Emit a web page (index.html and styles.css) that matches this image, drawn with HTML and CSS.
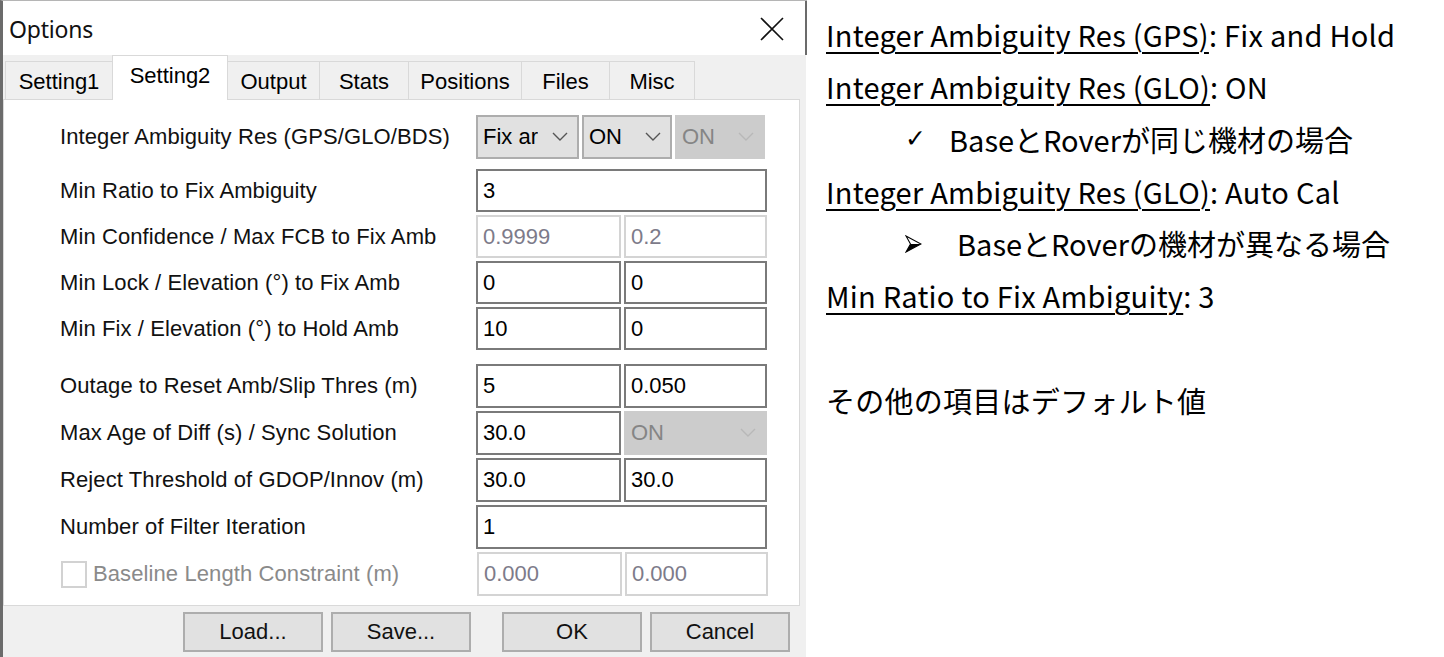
FILE: index.html
```html
<!DOCTYPE html>
<html lang="ja">
<head>
<meta charset="utf-8">
<title>Options</title>
<link rel="stylesheet" href="styles.css">
</head>
<body>
<div class="page">
  <div class="dialog">
    <div class="titlebar">
      <span class="title">Options</span>
      <svg class="close" width="24" height="24" viewBox="0 0 24 24"><path d="M1 1 L23 23 M23 1 L1 23" stroke="#111" stroke-width="1.6" fill="none"/></svg>
    </div>
    <div class="body">
      <div class="tabs">
        <div class="tab t1">Setting1</div>
        <div class="tab sel t2">Setting2</div>
        <div class="tab t3">Output</div>
        <div class="tab t4">Stats</div>
        <div class="tab t5">Positions</div>
        <div class="tab t6">Files</div>
        <div class="tab t7">Misc</div>
      </div>
      <div class="panel">
        <div class="row first">
          <div class="label">Integer Ambiguity Res (GPS/GLO/BDS)</div>
          <div class="ctrls">
            <div class="combo c1"><span>Fix ar</span><svg class="chev" width="16" height="10" viewBox="0 0 16 10"><path d="M1 1 L8 8 L15 1" stroke="#555" stroke-width="1.4" fill="none"/></svg></div>
            <div class="combo c2"><span>ON</span><svg class="chev" width="16" height="10" viewBox="0 0 16 10"><path d="M1 1 L8 8 L15 1" stroke="#555" stroke-width="1.4" fill="none"/></svg></div>
            <div class="combo c3 dis"><span>ON</span><svg class="chev" width="16" height="10" viewBox="0 0 16 10"><path d="M1 1 L8 8 L15 1" stroke="#b8b8b8" stroke-width="1.4" fill="none"/></svg></div>
          </div>
        </div>
        <div class="row">
          <div class="label">Min Ratio to Fix Ambiguity</div>
          <div class="ctrls"><div class="edit full">3</div></div>
        </div>
        <div class="row">
          <div class="label">Min Confidence / Max FCB to Fix Amb</div>
          <div class="ctrls"><div class="edit half dis">0.9999</div><div class="edit half dis">0.2</div></div>
        </div>
        <div class="row">
          <div class="label">Min Lock / Elevation (°) to Fix Amb</div>
          <div class="ctrls"><div class="edit half">0</div><div class="edit half">0</div></div>
        </div>
        <div class="row">
          <div class="label">Min Fix / Elevation (°) to Hold Amb</div>
          <div class="ctrls"><div class="edit half">10</div><div class="edit half">0</div></div>
        </div>
        <div class="row sep">
          <div class="label">Outage to Reset Amb/Slip Thres (m)</div>
          <div class="ctrls"><div class="edit half">5</div><div class="edit half">0.050</div></div>
        </div>
        <div class="row">
          <div class="label">Max Age of Diff (s) / Sync Solution</div>
          <div class="ctrls"><div class="edit half">30.0</div><div class="combo half dis"><span>ON</span><svg class="chev" width="16" height="10" viewBox="0 0 16 10"><path d="M1 1 L8 8 L15 1" stroke="#b8b8b8" stroke-width="1.4" fill="none"/></svg></div></div>
        </div>
        <div class="row">
          <div class="label">Reject Threshold of GDOP/Innov (m)</div>
          <div class="ctrls"><div class="edit half">30.0</div><div class="edit half">30.0</div></div>
        </div>
        <div class="row">
          <div class="label">Number of Filter Iteration</div>
          <div class="ctrls"><div class="edit full">1</div></div>
        </div>
        <div class="row">
          <div class="label dislabel"><span class="check"></span>Baseline Length Constraint (m)</div>
          <div class="ctrls"><div class="edit half dis">0.000</div><div class="edit half dis">0.000</div></div>
        </div>
      </div>
      <div class="buttons">
        <div class="btn">Load...</div>
        <div class="btn">Save...</div>
        <div class="btn wide-gap">OK</div>
        <div class="btn">Cancel</div>
      </div>
    </div>
  </div>
  <div class="notes">
    <p><u>Integer Ambiguity Res (GPS)</u>: Fix and Hold</p>
    <p><u>Integer Ambiguity Res (GLO)</u>: ON</p>
    <p class="sub"><span class="mark">✓</span>BaseとRoverが同じ機材の場合</p>
    <p><u>Integer Ambiguity Res (GLO)</u>: Auto Cal</p>
    <p class="sub arrow"><span class="mark"><svg class="dart" width="17" height="18" viewBox="0 0 17 18"><path d="M1 1 L16 9 L1 17 L5.5 9 Z" fill="none" stroke="#000" stroke-width="1.1" stroke-linejoin="miter"/><path d="M5.5 9 L16 9 L1 17 Z" fill="#000"/></svg></span>BaseとRoverの機材が異なる場合</p>
    <p><u>Min Ratio to Fix Ambiguity</u>: 3</p>
    <p class="blank"></p>
    <p>その他の項目はデフォルト値</p>
  </div>
</div>
</body>
</html>
```
FILE: styles.css
```css
* { box-sizing: border-box; }
html, body { margin: 0; padding: 0; background: #fff; }
body { width: 1444px; height: 657px; overflow: hidden; }

.page { display: flex; height: 657px; }

.dialog {
  width: 807px;
  height: 657px;
  border-left: 3px solid #6b6b6b;
  border-top: 1px solid #b5b5b5;
  display: flex;
  flex-direction: column;
  font-family: "Liberation Sans", Arial, sans-serif;
  font-size: 22px;
  color: #000;
}

.titlebar {
  height: 54px;
  background: #fff;
  display: flex;
  align-items: center;
  justify-content: space-between;
  padding-left: 6px;
  padding-right: 21px;
  border-right: 2px solid #6b6b6b;
}
.title { font-family: "Noto Sans", "Open Sans", sans-serif; font-size: 23px; color: #111; letter-spacing: -0.2px; margin-top: 2px; }
.close { display: block; margin-top: 2px; }

.body {
  flex: 1;
  background: #f0f0f0;
  display: flex;
  flex-direction: column;
  width: 803px;
}

.tabs {
  display: flex;
  align-items: flex-end;
  height: 44px;
  padding-left: 2px;
  position: relative;
  z-index: 1;
}
.tab {
  height: 38px;
  border: 1px solid #d9d9d9;
  border-bottom: none;
  background: #f0f0f0;
  display: flex;
  align-items: center;
  justify-content: center;
  margin-left: -1px;
  padding-top: 2px;
}
.tab.sel {
  background: #fff;
  border-color: #d9d9d9;
  padding-bottom: 6px;
  margin-bottom: -1px;
  height: 45px;
}
.t1 { width: 108px; margin-left: 0; }
.t2 { width: 116px; }
.t3 { width: 93px; }
.t4 { width: 90px; }
.t5 { width: 114px; }
.t6 { width: 89px; }
.t7 { width: 86px; }

.panel {
  background: #fff;
  border: 1px solid #d9d9d9;
  width: 797px;
  height: 507px;
  padding: 15px 0 0 56px;
  display: flex;
  flex-direction: column;
}

.row {
  display: flex;
  align-items: center;
  height: 43px;
  margin-bottom: 3px;
}
.row.first { height: 44px; margin-bottom: 10px; }
.row.sep { margin-top: 11px; height: 44px; }
.row.sep ~ .row { height: 44px; }

.label { width: 416px; white-space: nowrap; color: #111; letter-spacing: 0.1px; }
.label.dislabel { color: #8a8a8a; display: flex; align-items: center; margin-left: 1px; }
.check {
  width: 26px; height: 27px;
  border: 2px solid #d2d2d2;
  background: #fff;
  margin-right: 6px;
}

.ctrls { display: flex; gap: 3px; height: 100%; }

.edit {
  height: 100%;
  border: 2px solid #7a7a7a;
  background: #fff;
  display: flex;
  align-items: center;
  padding-left: 5px;
  color: #000;
}
.edit.full { width: 291px; }
.edit.half { width: 145px; }
.half + .half { width: 143px; }
.edit.dis { border-color: #d4d4d4; color: #7d7b8a; }

.combo {
  height: 100%;
  background: #e1e1e1;
  border: 2px solid #adadad;
  display: flex;
  align-items: center;
  justify-content: space-between;
  padding: 0 9px 0 5px;
  overflow: hidden;
  white-space: nowrap;
}
.combo span { overflow: hidden; }
.chev { flex: none; margin-left: 4px; }
.combo.c1 { width: 103px; }
.combo.c2 { width: 90px; }
.combo.c3 { width: 90px; }
.combo.dis { background: #cccccc; border-color: #cccccc; color: #858585; }

.buttons {
  display: flex;
  padding: 6px 0 0 180px;
  gap: 8px;
}
.btn {
  width: 140px;
  height: 40px;
  background: #e1e1e1;
  border: 2px solid #adadad;
  display: flex;
  align-items: center;
  justify-content: center;
  color: #111;
}
.btn.wide-gap { margin-left: 23px; }

.notes {
  padding: 8px 0 0 19px;
  font-family: "Noto Sans CJK JP", "Noto Sans", sans-serif;
  font-size: 29px;
  letter-spacing: 0.25px;
  color: #000;
}
.notes p { margin: 0; height: 52.3px; line-height: 52.3px; white-space: nowrap; }
.notes u { text-decoration-thickness: 1.5px; text-underline-offset: 5px; }
.notes .sub { padding-left: 79px; letter-spacing: 0; }
.notes .mark { display: inline-block; width: 44px; font-family: "DejaVu Sans", sans-serif; font-size: 25px; vertical-align: top; }
.notes .arrow .mark { width: 52px; }
.dart { vertical-align: -2px; }
```
